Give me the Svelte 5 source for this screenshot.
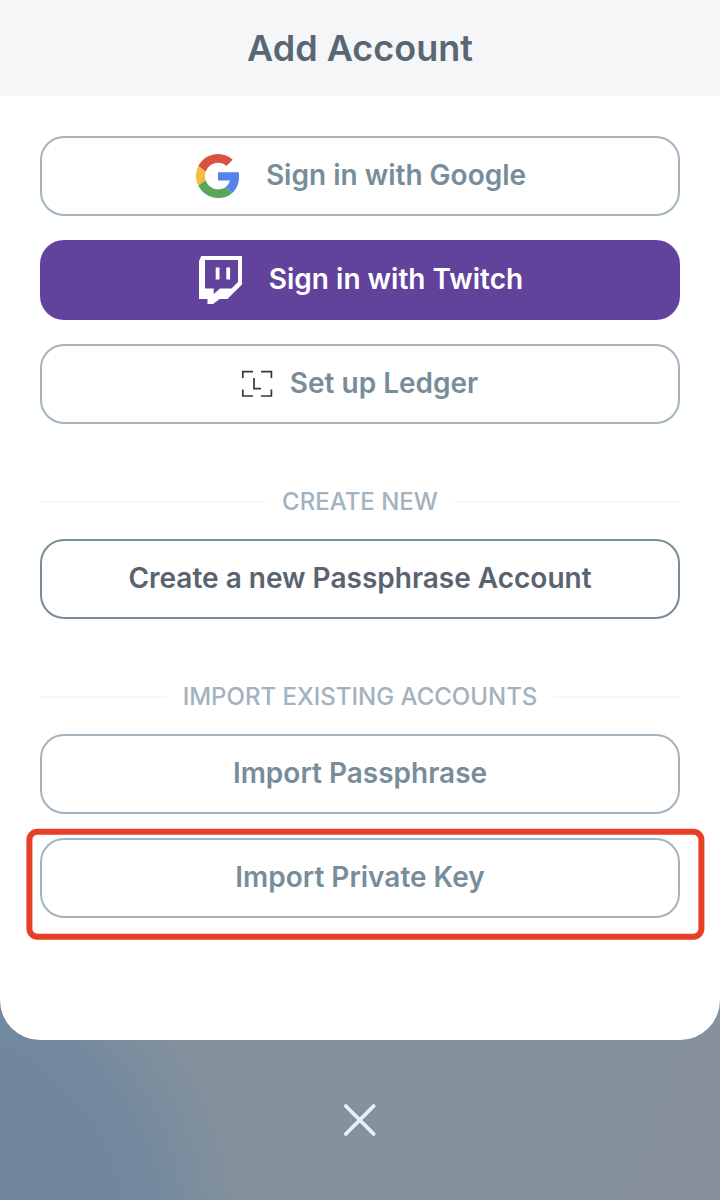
<script>
  const importOptions = ['Import Passphrase', 'Import Private Key'];
</script>

<main class="screen">
  <section class="sheet">
    <header><h1>Add Account</h1></header>
    <div class="content">
      <button class="google">
        <svg width="44" height="44" viewBox="0 0 48 48" aria-hidden="true">
          <path fill="#d9513f" d="M24 9.5c3.54 0 6.71 1.22 9.21 3.6l6.85-6.85C35.9 2.38 30.47 0 24 0 14.62 0 6.51 5.38 2.56 13.22l7.98 6.19C12.43 13.72 17.74 9.5 24 9.5z" />
          <path fill="#5383ec" d="M46.98 24.55c0-1.57-.15-3.09-.38-4.55H24v9.02h12.94c-.58 2.96-2.26 5.48-4.78 7.18l7.73 6c4.51-4.18 7.09-10.36 7.09-17.65z" />
          <path fill="#f2bd42" d="M10.53 28.59c-.48-1.45-.76-2.99-.76-4.59s.27-3.14.76-4.59l-7.98-6.19C.92 16.46 0 20.12 0 24c0 3.88.92 7.54 2.56 10.78l7.97-6.19z" />
          <path fill="#58a55c" d="M24 48c6.48 0 11.93-2.13 15.89-5.81l-7.73-6c-2.15 1.45-4.92 2.3-8.16 2.3-6.26 0-11.57-4.22-13.47-9.91l-7.98 6.19C6.51 42.62 14.62 48 24 48z" />
        </svg>
        <span>Sign in with Google</span>
      </button>
      <button class="twitch">
        <svg width="43" height="48" viewBox="0 0 43 48" fill="#fff" fill-rule="evenodd" aria-hidden="true">
          <path d="M2.3 0H43V28.5L28.4 43H20.7L14 48H8.5V43H0V5ZM6 4V32.5H14.7V38L21 32.5H32.5L39 26V4Z" />
          <path d="M16.7 11.4h3.8v12h-3.8zM27.3 11.4h3.8v12h-3.8z" />
        </svg>
        <span>Sign in with Twitch</span>
      </button>
      <button class="ledger">
        <svg width="32" height="28" viewBox="0 0 32 28" fill="none" stroke="#34373c" stroke-width="1.7" aria-hidden="true">
          <path d="M1.8 8V1.6H12M20 1.6H30.4V8M30.4 19.5V26H20M12 26H1.8V19.5M13 8V18.7H20" />
        </svg>
        <span>Set up Ledger</span>
      </button>

      <div class="divider"><span>CREATE NEW</span></div>
      <button class="create"><span>Create a new Passphrase Account</span></button>

      <div class="divider"><span>IMPORT EXISTING ACCOUNTS</span></div>
      {#each importOptions as label, i}
        <div class="option">
          <button><span>{label}</span></button>
          {#if i === 1}<div class="highlight"></div>{/if}
        </div>
      {/each}
    </div>
  </section>
  <footer>
    <button class="close" aria-label="Close">
      <svg width="36" height="36" viewBox="0 0 36 36" fill="none" stroke="#e6f1fc" stroke-width="3.8" stroke-linecap="round">
        <path d="M3.8 4L31.7 32M31.7 4L3.8 32" />
      </svg>
    </button>
  </footer>
</main>

<style>
  :global(body) { margin: 0; }
  .screen {
    width: 720px;
    height: 1200px;
    overflow: hidden;
    font-family: Inter, sans-serif;
    background:
      radial-gradient(circle at -90px 1240px, #70869b 150px, #72889e 236px, rgba(114, 136, 158, 0) 335px),
      linear-gradient(110deg, #80909c, #84919d 50%, #86919c);
  }
  .sheet {
    height: 1040px;
    overflow: hidden;
    background: #fff;
    border-radius: 0 0 40px 40px;
  }
  header {
    display: flex;
    align-items: center;
    justify-content: center;
    height: 96px;
    background: #f4f6f8;
  }
  h1 {
    margin: 0;
    font-size: 36px;
    line-height: 48px;
    font-weight: 600;
    color: #5a6672;
  }
  .content {
    display: flex;
    flex-direction: column;
    gap: 24px;
    padding: 40px;
  }
  button {
    display: flex;
    align-items: center;
    justify-content: center;
    box-sizing: border-box;
    width: 100%;
    height: 80px;
    padding: 0 0 2px;
    border: 2px solid #a3b3bf;
    border-radius: 24px;
    background: #fff;
    color: #788d9a;
    font: 600 28px/40px Inter, sans-serif;
  }
  button svg { flex: none; position: relative; top: 1px; }
  .google { gap: 26px; padding-left: 2px; }
  .twitch { gap: 26.6px; padding-left: 2.4px; background: #61439c; border-color: #61439c; color: #fff; }
  .ledger { gap: 16.5px; padding-right: 0.5px; }
  .create { border-color: #788b98; color: #596470; }
  .divider {
    display: flex;
    align-items: center;
    gap: 16px;
    height: 30px;
    margin: 39px 0 -2px;
    color: #a2b2be;
    font-size: 24px;
    line-height: 30px;
    font-weight: 500;
  }
  .divider::before, .divider::after {
    content: '';
    flex: 1;
    height: 2px;
    background: #f4f6f8;
  }
  .option { position: relative; }
  .highlight {
    position: absolute;
    inset: -9px -24px -22px -14px;
    border: 6px solid #e64027;
    border-radius: 11px;
    transform: translate(0.4px, -0.2px);
    pointer-events: none;
  }
  footer {
    display: flex;
    align-items: center;
    justify-content: center;
    height: 160px;
  }
  .close { width: 36px; height: 36px; padding: 0; border: 0; border-radius: 0; background: none; }
  .close svg { top: 0; }
</style>
